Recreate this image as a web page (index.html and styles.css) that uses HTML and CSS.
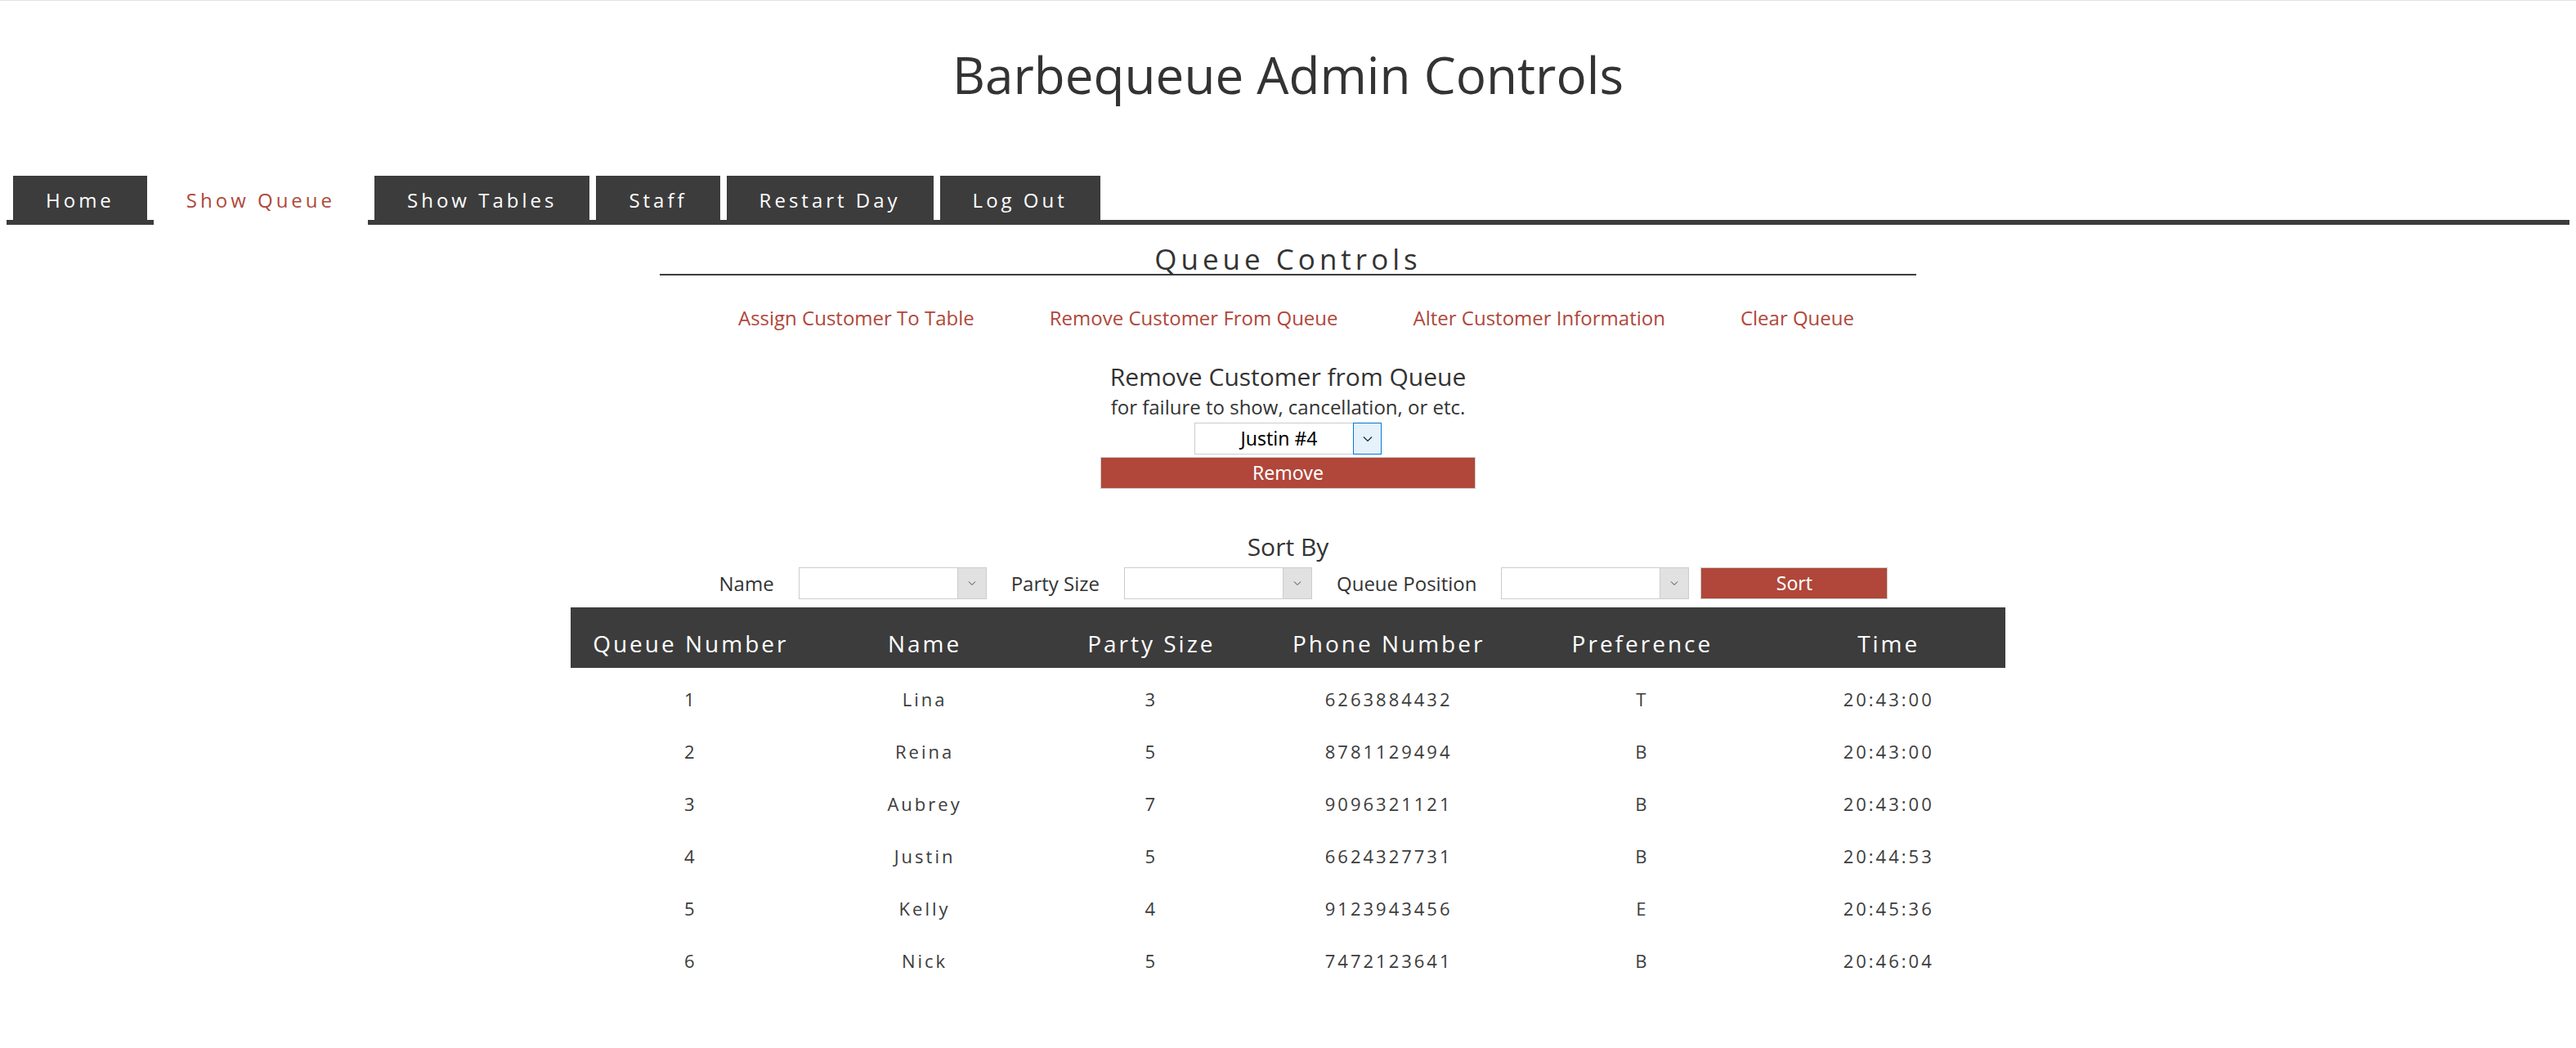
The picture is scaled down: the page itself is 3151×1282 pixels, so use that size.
FILE: index.html
```html
<!DOCTYPE html>
<html>
<head>
<meta charset="utf-8">
<title>Barbequeue Admin Controls</title>
<link rel="stylesheet" href="styles.css">
</head>
<body>
<h1 class="title">Barbequeue Admin Controls</h1>
<ul class="tabs">
  <li class="tab"><a href="#">Home</a></li>
  <li class="tab active"><a href="#">Show Queue</a></li>
  <li class="tab"><a href="#">Show Tables</a></li>
  <li class="tab"><a href="#">Staff</a></li>
  <li class="tab"><a href="#">Restart Day</a></li>
  <li class="tab"><a href="#">Log Out</a></li>
</ul>

<h2 class="section-title">Queue Controls</h2>
<div class="actions">
  <a href="#">Assign Customer To Table</a>
  <a href="#">Remove Customer From Queue</a>
  <a href="#">Alter Customer Information</a>
  <a href="#">Clear Queue</a>
</div>

<div class="remove-form">
  <h3 class="form-title">Remove Customer from Queue</h3>
  <p class="form-sub">for failure to show, cancellation, or etc.</p>
  <div class="select focused">
    <span class="select-value">Justin #4</span>
    <span class="select-arrow"><svg width="12" height="8" viewBox="0 0 12 8"><path d="M1 1.5 L6 6.5 L11 1.5" fill="none" stroke="#222" stroke-width="1.2"/></svg></span>
  </div>
  <button class="btn btn-wide">Remove</button>
</div>

<div class="sort">
  <h3 class="sort-title">Sort By</h3>
  <div class="sort-row">
    <span class="sort-label">Name</span>
    <div class="select plain">
      <span class="select-value"></span>
      <span class="select-arrow"><svg width="10" height="7" viewBox="0 0 10 7"><path d="M1 1.5 L5 5.5 L9 1.5" fill="none" stroke="#444" stroke-width="1"/></svg></span>
    </div>
    <span class="sort-label">Party Size</span>
    <div class="select plain">
      <span class="select-value"></span>
      <span class="select-arrow"><svg width="10" height="7" viewBox="0 0 10 7"><path d="M1 1.5 L5 5.5 L9 1.5" fill="none" stroke="#444" stroke-width="1"/></svg></span>
    </div>
    <span class="sort-label">Queue Position</span>
    <div class="select plain">
      <span class="select-value"></span>
      <span class="select-arrow"><svg width="10" height="7" viewBox="0 0 10 7"><path d="M1 1.5 L5 5.5 L9 1.5" fill="none" stroke="#444" stroke-width="1"/></svg></span>
    </div>
    <button class="btn btn-sort">Sort</button>
  </div>
</div>

<table class="queue">
  <thead>
    <tr><th>Queue Number</th><th>Name</th><th>Party Size</th><th>Phone Number</th><th>Preference</th><th>Time</th></tr>
  </thead>
  <tbody>
    <tr><td>1</td><td>Lina</td><td>3</td><td>6263884432</td><td>T</td><td>20:43:00</td></tr>
    <tr><td>2</td><td>Reina</td><td>5</td><td>8781129494</td><td>B</td><td>20:43:00</td></tr>
    <tr><td>3</td><td>Aubrey</td><td>7</td><td>9096321121</td><td>B</td><td>20:43:00</td></tr>
    <tr><td>4</td><td>Justin</td><td>5</td><td>6624327731</td><td>B</td><td>20:44:53</td></tr>
    <tr><td>5</td><td>Kelly</td><td>4</td><td>9123943456</td><td>E</td><td>20:45:36</td></tr>
    <tr><td>6</td><td>Nick</td><td>5</td><td>7472123641</td><td>B</td><td>20:46:04</td></tr>
  </tbody>
</table>
</body>
</html>
```
FILE: styles.css
```css
html {
  border-top: 1px solid #e2e2e2;
}
body {
  margin: 0;
  padding: 8px;
  font-family: "Open Sans", "Noto Sans", sans-serif;
  color: #333;
  background: #fff;
}
.title {
  margin: 40px 0 0;
  font-size: 62px;
  font-weight: 400;
  line-height: 84px;
  text-align: center;
  color: #333;
}
.tabs {
  display: flex;
  margin: 82px 0 0;
  padding: 0 0 0 8px;
  list-style: none;
  border-bottom: 6px solid #3c3c3c;
}
.tab {
  margin-right: 8px;
}
.tab a {
  display: block;
  padding: 14px 40px 8px;
  font-size: 24px;
  line-height: 32px;
  letter-spacing: 4px;
  color: #fff;
  background: #3c3c3c;
  text-decoration: none;
}
.tab.active a {
  background: #fff;
  color: #b0473a;
  padding-bottom: 14px;
  margin-bottom: -6px;
}
.section-title {
  width: 49%;
  margin: 24px auto 0;
  padding-bottom: 1px;
  font-size: 35px;
  font-weight: 400;
  line-height: 35px;
  letter-spacing: 5px;
  text-align: center;
  border-bottom: 2px solid #3c3c3c;
}
.actions {
  display: flex;
  justify-content: center;
  gap: 92px;
  margin-top: 36px;
  padding-left: 20px;
  font-size: 24px;
  line-height: 32px;
}
.actions a {
  color: #b0473a;
  text-decoration: none;
}
.remove-form {
  display: flex;
  flex-direction: column;
  align-items: center;
}
.form-title {
  margin: 36px 0 0;
  font-size: 30px;
  font-weight: 400;
  line-height: 40px;
}
.form-sub {
  margin: 1px 0 0;
  font-size: 24px;
  line-height: 32px;
}
.select {
  display: flex;
  box-sizing: border-box;
  width: 229px;
  height: 39px;
  border: 1px solid #ccc;
  background: #fff;
}
.remove-form .select {
  margin-top: 3px;
}
.select-value {
  flex: 1;
  text-align: center;
  font-family: "Noto Sans", "Open Sans", sans-serif;
  font-size: 23px;
  line-height: 37px;
  color: #000;
  padding-left: 12px;
}
.select-arrow {
  display: flex;
  align-items: center;
  justify-content: center;
  box-sizing: border-box;
  width: 35px;
  background: #e1e1e1;
  border-left: 1px solid #ccc;
}
.select.focused .select-arrow {
  width: 35px;
  margin: -1px -1px -1px 0;
  background: #e5f1fb;
  border: 1px solid #0078d7;
}
.btn {
  box-sizing: border-box;
  height: 39px;
  border: 1px solid #ccc;
  background: #b0473a;
  color: #fff;
  font-family: "Noto Sans", "Open Sans", sans-serif;
  font-size: 23px;
  line-height: 35px;
  padding: 0;
}
.btn-wide {
  width: 459px;
  margin-top: 3px;
}
.sort {
  display: flex;
  flex-direction: column;
  align-items: center;
}
.sort-title {
  margin: 51px 0 0;
  font-size: 30px;
  font-weight: 400;
  line-height: 40px;
}
.sort-row {
  display: flex;
  align-items: center;
  margin-top: 5px;
  padding-left: 38px;
}
.sort-label {
  font-size: 24px;
  line-height: 32px;
  margin-right: 30px;
}
.sort-row .select {
  width: 230px;
  margin-right: 30px;
}
.sort-row .select:nth-last-of-type(1) {
  margin-right: 14px;
}
.btn-sort {
  width: 229px;
}
.queue {
  width: 56%;
  margin: 10px auto 0;
  border-collapse: collapse;
  table-layout: fixed;
}
.queue th {
  padding: 25px 0 11px;
  background: #3c3c3c;
  color: #fff;
  font-size: 28px;
  font-weight: 400;
  line-height: 38px;
  letter-spacing: 3px;
  text-align: center;
}
.queue th:nth-child(1) { width: 16.76%; }
.queue th:nth-child(2) { width: 15.85%; }
.queue th:nth-child(3) { width: 15.74%; }
.queue th:nth-child(4) { width: 17.33%; }
.queue th:nth-child(5) { width: 18.02%; }
.queue th:nth-child(6) { width: 16.30%; }
.queue td {
  padding: 17px 0;
  font-size: 22px;
  line-height: 30px;
  letter-spacing: 3px;
  text-align: center;
  color: #3c3c3c;
}
.queue tbody tr:first-child td {
  padding-top: 23px;
}
```
